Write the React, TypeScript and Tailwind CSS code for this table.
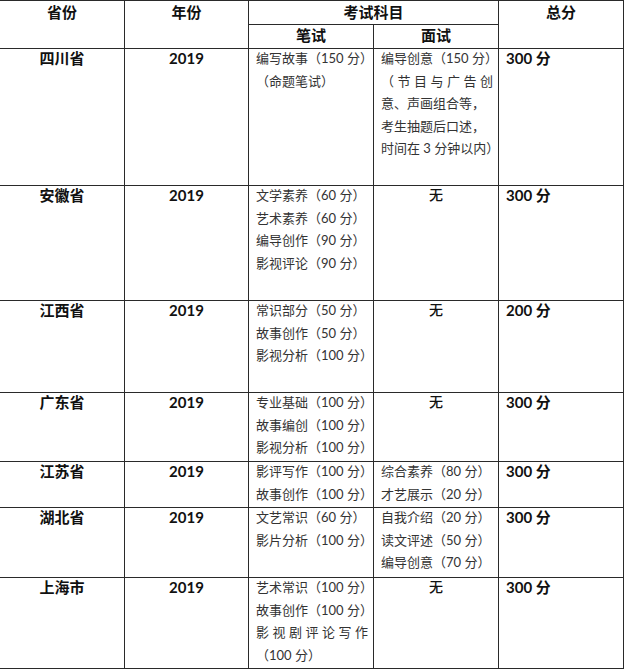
import React from "react"

type Row = {
  province: string
  written: string[]
  interview: string[]
  total: string
  h: string
  justifyW?: number[]
  justifyI?: number[]
}

const rows: Row[] = [
  {
    province: "四川省",
    written: ["编写故事（150 分）", "（命题笔试）"],
    interview: ["编导创意（150 分）", "（节目与广告创", "意、声画组合等，", "考生抽题后口述，", "时间在 3 分钟以内）"],
    justifyI: [1],
    total: "300 分",
    h: "h-[137px]",
  },
  {
    province: "安徽省",
    written: ["文学素养（60 分）", "艺术素养（60 分）", "编导创作（90 分）", "影视评论（90 分）"],
    interview: [],
    total: "300 分",
    h: "h-[115px]",
  },
  {
    province: "江西省",
    written: ["常识部分（50 分）", "故事创作（50 分）", "影视分析（100 分）"],
    interview: [],
    total: "200 分",
    h: "h-[92px]",
  },
  {
    province: "广东省",
    written: ["专业基础（100 分）", "故事编创（100 分）", "影视分析（100 分）"],
    interview: [],
    total: "300 分",
    h: "h-[69px]",
  },
  {
    province: "江苏省",
    written: ["影评写作（100 分）", "故事创作（100 分）"],
    interview: ["综合素养（80 分）", "才艺展示（20 分）"],
    total: "300 分",
    h: "h-[46px]",
  },
  {
    province: "湖北省",
    written: ["文艺常识（60 分）", "影片分析（100 分）"],
    interview: ["自我介绍（20 分）", "读文评述（50 分）", "编导创意（70 分）"],
    total: "300 分",
    h: "h-[70px]",
  },
  {
    province: "上海市",
    written: ["艺术常识（100 分）", "故事创作（100 分）", "影视剧评论写作", "（100 分）"],
    justifyW: [2],
    interview: [],
    total: "300 分",
    h: "h-[91px]",
  },
]

const cell = "border border-[#2a2a2a] align-top p-0"

function Lines({ lines, justify }: { lines: string[]; justify?: number[] }) {
  return (
    <div className="pl-[7px] pr-[5px] mt-[-2px] text-[13px] leading-[22.5px] text-[#333] whitespace-nowrap">
      {lines.map((l, i) =>
        justify?.includes(i) ? (
          <div key={i} className="text-justify [text-align-last:justify] whitespace-normal">
            {l.split("").join(" ")}
          </div>
        ) : (
          <div key={i}>{l}</div>
        )
      )}
    </div>
  )
}

export default function App() {
  return (
    <div className="w-[624px] h-[670px] overflow-hidden bg-white font-['Lato','Noto_Sans_CJK_SC',sans-serif]">
      <table className="table-fixed border-collapse w-[624px] ml-[-1px] mt-0 text-[#111]">
        <colgroup>
          <col className="w-[125px]" />
          <col className="w-[124px]" />
          <col className="w-[125px]" />
          <col className="w-[125px]" />
          <col className="w-[125px]" />
        </colgroup>
        <thead>
          <tr className="h-[24px]">
            <th rowSpan={2} className={cell}>
              <div className="text-[15px] font-bold leading-[22px] text-center">省份</div>
            </th>
            <th rowSpan={2} className={cell}>
              <div className="text-[15px] font-bold leading-[22px] text-center">年份</div>
            </th>
            <th colSpan={2} className={cell}>
              <div className="text-[15px] font-bold leading-[22px] text-center">考试科目</div>
            </th>
            <th rowSpan={2} className={cell}>
              <div className="text-[15px] font-bold leading-[22px] text-center">总分</div>
            </th>
          </tr>
          <tr className="h-[24px]">
            <th className={cell}>
              <div className="text-[15px] font-bold leading-[20px] text-center">笔试</div>
            </th>
            <th className={cell}>
              <div className="text-[15px] font-bold leading-[20px] text-center">面试</div>
            </th>
          </tr>
        </thead>
        <tbody>
          {rows.map((r) => (
            <tr key={r.province} className={r.h}>
              <td className={cell}>
                <div className="text-center text-[15px] font-bold leading-[22px] mt-[-2px]">{r.province}</div>
              </td>
              <td className={cell}>
                <div className="text-center text-[15px] font-bold leading-[22px] mt-[-2px]">2019</div>
              </td>
              <td className={cell}>
                <Lines lines={r.written} justify={r.justifyW} />
              </td>
              <td className={cell}>
                {r.interview.length ? (
                  <Lines lines={r.interview} justify={r.justifyI} />
                ) : (
                  <div className="text-center text-[14px] font-medium leading-[22px] mt-[-2px]">无</div>
                )}
              </td>
              <td className={cell}>
                <div className="pl-[7px] text-[15px] font-bold leading-[22px] mt-[-2px]">{r.total}</div>
              </td>
            </tr>
          ))}
        </tbody>
      </table>
    </div>
  )
}
